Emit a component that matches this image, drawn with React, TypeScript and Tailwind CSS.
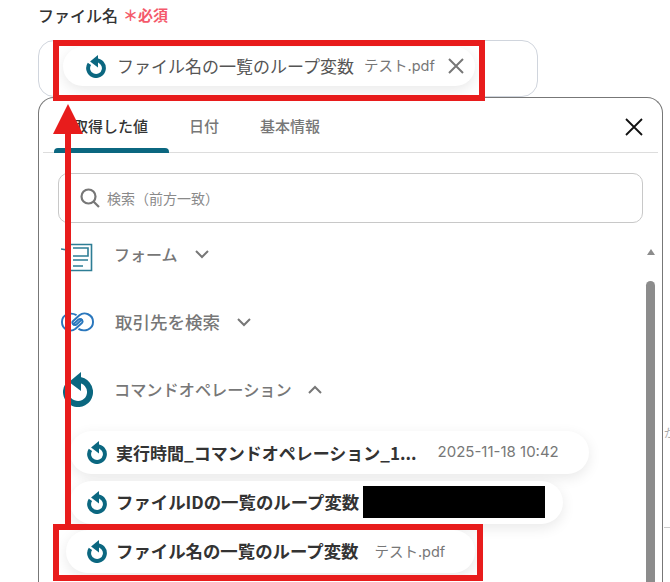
import { ReactElement, ReactNode } from 'react';

const font = { fontFamily: '"Noto Sans CJK JP", "Noto Sans", sans-serif' };
const latin = { fontFamily: 'Inter, "Noto Sans CJK JP", sans-serif' };

const LoopIcon = ({ className }: { className: string }): ReactElement => (
  <svg viewBox="0 0 30 35" className={className} fill="none">
    <path d="M5 13.4A12 12 0 1 0 15 8" stroke="#0b6780" strokeWidth="6" />
    <path d="M18 0v19L6 10z" fill="#0b6780" />
  </svg>
);

const Chevron = ({ up }: { up?: boolean }): ReactElement => (
  <svg viewBox="0 0 14 9" className="w-[14px] h-[9px]" fill="none" stroke="#777" strokeWidth="2">
    <path d={up ? 'M1 8l6-6 6 6' : 'M1 1l6 6 6-6'} />
  </svg>
);

const Chip = ({ className, children }: { className: string; children: ReactNode }): ReactElement => (
  <div className={`flex items-center rounded-full bg-white shadow-[0_4px_14px_rgba(0,0,0,0.09)] ${className}`}>
    {children}
  </div>
);

const App = (): ReactElement => {
  return (
    <div className="relative w-[670px] h-[582px] overflow-hidden bg-white" style={font}>
      <div className="pl-[38px] w-[663px]">
        <div className="h-[40px] pt-[3px] flex items-start gap-[5px] text-[16px] leading-[24px] font-medium text-[#333]">
          ファイル名
          <span className="text-[#f4596b] text-[15px] font-bold">＊必須</span>
        </div>

        <div className="w-[500px] h-[57px] rounded-[16px] border border-[#d0d5dd] pt-[6px] pl-[24px]">
          <Chip className="w-[412px] h-[39px] pl-[23px] pb-[1px]">
            <LoopIcon className="w-[20px] h-[23px]" />
            <span className="ml-[11px] text-[17px] text-[#555]">ファイル名の一覧のループ変数</span>
            <span className="ml-[10px] text-[14.500px] text-[#777]" style={latin}>テスト.pdf</span>
            <svg viewBox="0 0 16 16" className="ml-[13px] w-[16px] h-[16px]" stroke="#777" strokeWidth="2">
              <path d="M1 1l14 14M15 1L1 15" />
            </svg>
          </Chip>
        </div>

        <div className="h-[485px] rounded-t-[16px] border border-b-0 border-[#777] px-[4px]">
          <div className="h-[55px] border-b border-[#ddd] flex pl-[11px] text-[15px] leading-[24px] font-medium">
            <div className="w-[115px] h-[55px] flex flex-col justify-between pt-[16px] text-[#333]">
              <span className="pl-[19px]">取得した値</span>
              <div className="h-[5px] rounded-t-[4px] bg-[#0b6780]" />
            </div>
            <div className="ml-[20px] pt-[16px] text-[#777]">日付</div>
            <div className="ml-[41px] pt-[16px] text-[#777]">基本情報</div>
            <svg viewBox="0 0 18 18" className="ml-auto mr-[15px] mt-[20px] w-[18px] h-[18px]" stroke="#111" strokeWidth="1.8">
              <path d="M1 1l16 16M17 1L1 17" />
            </svg>
          </div>

          <div className="mt-[20px] mx-[15px] h-[50px] rounded-[10px] border border-[#c8c8c8] flex items-center pl-[21px]">
            <svg viewBox="0 0 20 20" className="w-[20px] h-[20px]" fill="none" stroke="#777" strokeWidth="2.2">
              <circle cx="8.500" cy="8.500" r="7" />
              <path d="M13.500 13.500l5.500 5.500" />
            </svg>
            <span className="ml-[7px] text-[14px] leading-[20px] pb-[1px] text-[#8a8a8a]">検索（前方一致）</span>
          </div>

          <div className="flex">
            <div className="flex-1 h-[358px] overflow-hidden pl-[18px]">
              <div className="h-[64px] pt-[20px] flex items-start">
                <svg viewBox="0 0 32 29" className="w-[32px] h-[29px]" fill="none" stroke="#2d7d95" strokeWidth="1.600">
                  <path d="M9 1.500h21.500v26H9M12 5h15v8H12M12 17h15M12 23h10M0 6l6 1v4" />
                </svg>
                <span className="ml-[21px] -mt-[1px] text-[16px] leading-[24px] font-medium text-[#777]">フォーム</span>
                <span className="ml-[17px] mt-[7px]"><Chevron /></span>
              </div>
              <div className="h-[70px] flex items-center">
                <svg viewBox="0 0 34 20" className="w-[33px] h-[20px]" fill="none" stroke="#2a77bd" strokeWidth="2">
                  <path d="M16 3C10-.5 1 2 1 10c0 8 9 11 14 7l6.500-6c2-2-1-5.500-3.500-3.500L12 13" />
                  <path d="M18 17c6 3.500 15 1 15-7 0-8-9-11-14-7l-6.500 6c-2 2 1 5.500 3.500 3.500L22 7" />
                </svg>
                <span className="ml-[21px] text-[17.500px] font-medium text-[#777]">取引先を検索</span>
                <span className="ml-[17px]"><Chevron /></span>
              </div>
              <div className="h-[66px] pb-[1px] flex items-center">
                <LoopIcon className="w-[30px] h-[35px] ml-[2px]" />
                <span className="ml-[21px] text-[16.200px] font-medium text-[#777]">コマンドオペレーション</span>
                <span className="ml-[16px]"><Chevron up /></span>
              </div>

              <div className="flex flex-col gap-[6.500px] mt-[8px]">
                <Chip className="ml-[9px] w-[519px] h-[43px] pl-[17px]">
                  <LoopIcon className="w-[20px] h-[23px]" />
                  <span className="ml-[9px] text-[17px] font-bold text-[#333] whitespace-nowrap">実行時間_コマンドオペレーション_1...</span>
                  <span className="ml-[21px] text-[15px] text-[#777] whitespace-nowrap" style={latin}>2025-11-18 10:42</span>
                </Chip>
                <Chip className="ml-[9px] w-[493px] h-[43px] pl-[17px]">
                  <LoopIcon className="w-[20px] h-[23px]" />
                  <span className="ml-[9px] text-[17.400px] font-bold text-[#333] whitespace-nowrap">ファイルIDの一覧のループ変数</span>
                  <div className="ml-[4px] w-[182px] h-[32px] bg-black" />
                </Chip>
                <Chip className="ml-[5px] w-[409px] h-[43px] pl-[21px]">
                  <LoopIcon className="w-[20px] h-[23px]" />
                  <span className="ml-[9px] text-[17.400px] font-bold text-[#333] whitespace-nowrap">ファイル名の一覧のループ変数</span>
                  <span className="ml-[16px] text-[14.500px] text-[#777]" style={latin}>テスト.pdf</span>
                </Chip>
              </div>
            </div>

            <div className="w-[15px] pt-[26px] pl-[3px] pr-[3px] flex flex-col items-center">
              <div className="w-0 h-0 border-x-[4px] border-x-transparent border-b-[6px] border-b-[#8c8c8c]" />
              <div className="mt-[26px] w-[9px] h-[320px] rounded-t-full bg-[#8c8c8c]" />
            </div>
          </div>
        </div>
      </div>

      {/* red annotations */}
      <div className="absolute left-[53px] top-[40px] w-[432px] h-[61px] border-[6px] border-[#e81c1c]" />
      <div className="absolute left-[53px] top-[524px] w-[430px] h-[57px] border-[6px] border-[#e81c1c]" />
      <div className="absolute left-[65px] top-[130px] w-[6px] h-[394px] bg-[#e81c1c]" />
      <div className="absolute left-[53px] top-[104px] w-0 h-0 border-x-[15px] border-x-transparent border-b-[30px] border-b-[#e81c1c]" />

      {/* bits of the page behind the panel */}
      <div className="absolute left-[664px] top-[527px] w-[6px] h-px bg-[#ccc]" />
      <div className="absolute left-[664px] top-[425px] text-[12px] leading-[16px] text-[#aaa]">が</div>
    </div>
  )
}

export default App;
